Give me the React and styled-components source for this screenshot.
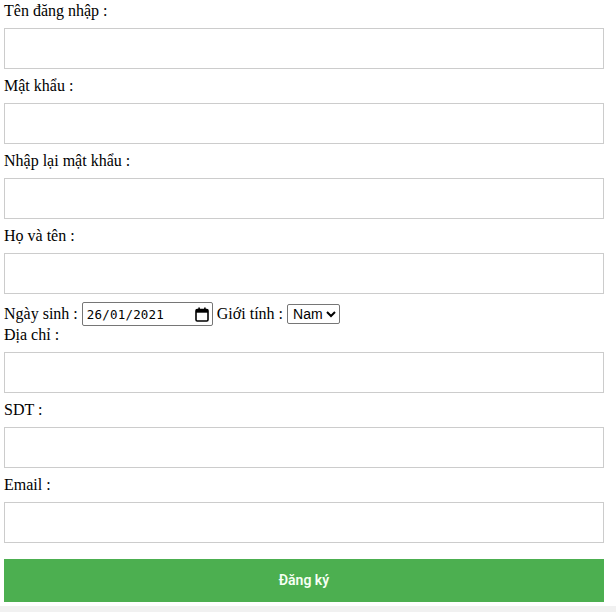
import React from "react";
import styled, { createGlobalStyle } from "styled-components";

const Global = createGlobalStyle`
  html { background: #f1f1f1; }
  body {
    margin: 0;
    font-family: "Liberation Serif", "Times New Roman", serif;
    font-size: 16px;
    color: #000;
  }
`;

const Page = styled.div`
  background: #fff;
  height: 606px;
  padding: 2px 12px 0 4px;
  box-sizing: border-box;
`;

const Form = styled.form`
  width: 600px;
`;

const Label = styled.label`
  display: inline;
`;

const TextInput = styled.input`
  width: 100%;
  padding: 12px 20px;
  margin: 8px 0;
  display: inline-block;
  border: 1px solid #ccc;
  box-sizing: border-box;
  font-family: "Liberation Sans", Arial, sans-serif;
  font-size: 13.333px;
  background: #fff;
  outline: none;
`;

const DateBox = styled.span`
  display: inline-flex;
  align-items: center;
  justify-content: space-between;
  width: 131px;
  box-sizing: border-box;
  border: 1px solid #767676;
  border-radius: 2px;
  padding: 4px 3px 3px 4px;
  line-height: 15px;
  vertical-align: baseline;
  font-family: "DejaVu Sans Mono", "Liberation Mono", monospace;
  font-size: 12.5px;
  letter-spacing: 0.2px;
  color: #000;
`;

const Select = styled.select`
  font-family: "Liberation Sans", Arial, sans-serif;
  font-size: 14px;
  height: 20px;
  padding: 0 0 0 1px;
  border: 1px solid #767676;
  border-radius: 2px;
  background: #fff;
  color: #000;
  vertical-align: baseline;
`;

const SubmitButton = styled.button`
  width: 100%;
  background-color: #4caf50;
  color: #f6fff4;
  padding: 14px 20px;
  margin: 8px 0;
  border: none;
  cursor: pointer;
  font-family: Roboto, "Liberation Sans", sans-serif;
  font-size: 14px;
  font-weight: 600;
  line-height: 15px;
  display: block;
`;

const CalendarIcon = () => (
  <svg width="14" height="15" viewBox="0 0 14 15" aria-hidden="true">
    <rect x="1" y="2.5" width="12" height="11.5" rx="1.2" fill="none" stroke="#000" strokeWidth="1.6" />
    <rect x="1" y="2.5" width="12" height="3.2" fill="#000" />
    <rect x="3.3" y="0.5" width="1.6" height="3" fill="#000" />
    <rect x="9.1" y="0.5" width="1.6" height="3" fill="#000" />
  </svg>
);

const fields = [
  ["username", "Tên đăng nhập :", "text"],
  ["password", "Mật khẩu :", "password"],
  ["repassword", "Nhập lại mật khẩu :", "password"],
  ["fullname", "Họ và tên :", "text"],
];

const fields2 = [
  ["address", "Địa chỉ :", "text"],
  ["phone", "SDT :", "text"],
  ["email", "Email :", "text"],
];

export default function App() {
  return (
    <>
      <Global />
      <Page>
        <Form onSubmit={(e) => e.preventDefault()}>
          {fields.map(([id, label, type]) => (
            <React.Fragment key={id}>
              <Label htmlFor={id}>{label}</Label>
              <TextInput id={id} type={type} />
            </React.Fragment>
          ))}
          <Label>Ngày sinh : </Label>
          <DateBox>
            <span>26/01/2021</span>
            <CalendarIcon />
          </DateBox>{" "}
          <Label htmlFor="gender">Giới tính : </Label>
          <Select id="gender" defaultValue="Nam">
            <option>Nam</option>
            <option>Nữ</option>
          </Select>
          <br />
          {fields2.map(([id, label, type]) => (
            <React.Fragment key={id}>
              <Label htmlFor={id}>{label}</Label>
              <TextInput id={id} type={type} />
            </React.Fragment>
          ))}
          <SubmitButton type="submit">Đăng ký</SubmitButton>
        </Form>
      </Page>
    </>
  );
}
